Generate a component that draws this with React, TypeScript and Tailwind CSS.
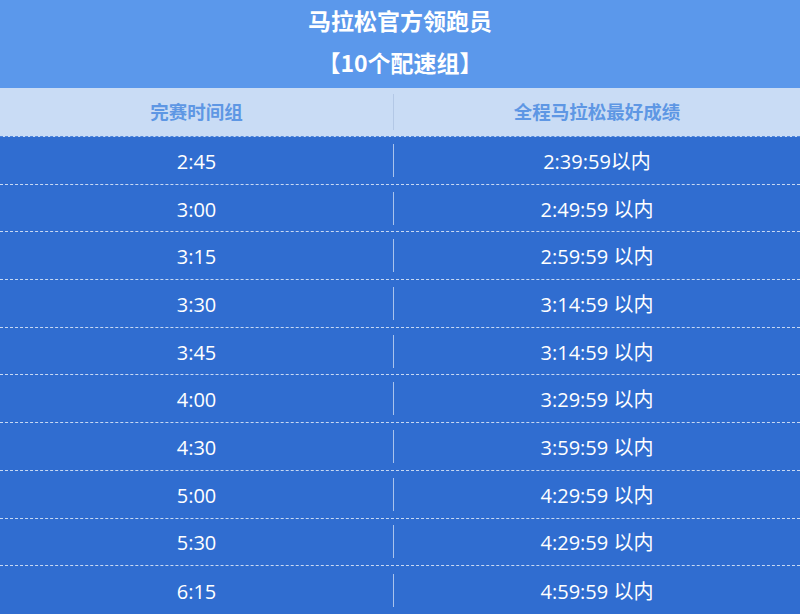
import React from "react";

const rows: [string, string][] = [
  ["2:45", "2:39:59以内"],
  ["3:00", "2:49:59 以内"],
  ["3:15", "2:59:59 以内"],
  ["3:30", "3:14:59 以内"],
  ["3:45", "3:14:59 以内"],
  ["4:00", "3:29:59 以内"],
  ["4:30", "3:59:59 以内"],
  ["5:00", "4:29:59 以内"],
  ["5:30", "4:29:59 以内"],
  ["6:15", "4:59:59 以内"],
];

export default function App() {
  return (
    <div
      className="w-[800px] h-[614px] overflow-hidden bg-[#306dd0]"
      style={{ fontFamily: '"Noto Sans CJK SC", "Noto Sans", sans-serif' }}
    >
      <div className="h-[88px] bg-[#5b98eb] flex flex-col items-center text-white font-bold text-[23px]">
        <div className="h-[40px] flex items-center">马拉松官方领跑员</div>
        <div className="h-[44px] flex items-center">【10个配速组】</div>
      </div>
      <div className="h-[49px] bg-[#c9dcf5] flex items-center text-[#5e97e4] font-bold text-[18.5px] border-b border-dashed border-[#4f86dc]">
        <div className="w-[393px] text-center">完赛时间组</div>
        <div className="w-px h-[36px] bg-[#b3c8e6]"></div>
        <div className="flex-1 text-center">全程马拉松最好成绩</div>
      </div>
      {rows.map(([a, b], i) => (
        <div
          key={i}
          className={`h-[47.7px] flex items-center text-white text-[20px] ${
            i < rows.length - 1 ? "border-b border-dashed border-[#c8d9f3]" : ""
          }`}
          style={{ fontFamily: '"Open Sans", "Noto Sans CJK SC", sans-serif' }}
        >
          <div className="w-[393px] text-center pt-[3px]">{a}</div>
          <div className="w-px h-[33px] bg-[#a9c3ec]"></div>
          <div className="flex-1 text-center pt-[3px]">{b}</div>
        </div>
      ))}
    </div>
  );
}
